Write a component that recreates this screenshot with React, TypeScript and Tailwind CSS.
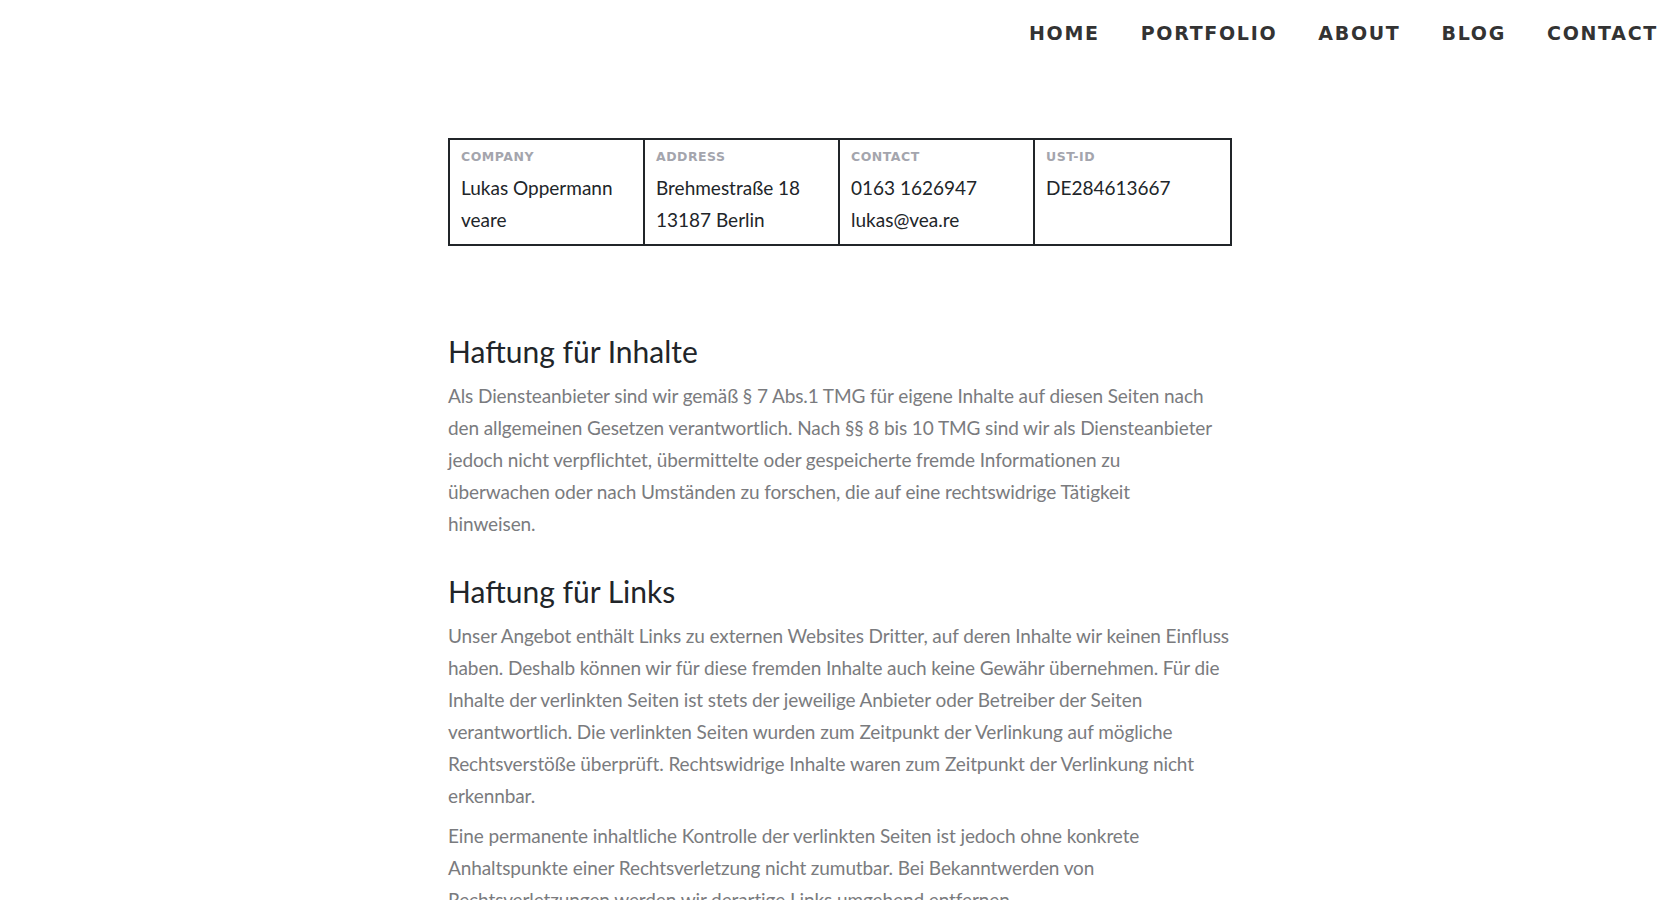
import React from "react";

const body = { fontFamily: "Lato, 'Open Sans', sans-serif" };
const nav = { fontFamily: "'DejaVu Sans', Verdana, sans-serif" };

const cells = [
  { label: "COMPANY", lines: ["Lukas Oppermann", "veare"] },
  { label: "ADDRESS", lines: ["Brehmestraße 18", "13187 Berlin"] },
  { label: "CONTACT", lines: ["0163 1626947", "lukas@vea.re"] },
  { label: "UST-ID", lines: ["DE284613667"] },
];

const p1 = [
  "Als Diensteanbieter sind wir gemäß § 7 Abs.1 TMG für eigene Inhalte auf diesen Seiten nach",
  "den allgemeinen Gesetzen verantwortlich. Nach §§ 8 bis 10 TMG sind wir als Diensteanbieter",
  "jedoch nicht verpflichtet, übermittelte oder gespeicherte fremde Informationen zu",
  "überwachen oder nach Umständen zu forschen, die auf eine rechtswidrige Tätigkeit",
  "hinweisen.",
];
const p2 = [
  "Unser Angebot enthält Links zu externen Websites Dritter, auf deren Inhalte wir keinen Einfluss",
  "haben. Deshalb können wir für diese fremden Inhalte auch keine Gewähr übernehmen. Für die",
  "Inhalte der verlinkten Seiten ist stets der jeweilige Anbieter oder Betreiber der Seiten",
  "verantwortlich. Die verlinkten Seiten wurden zum Zeitpunkt der Verlinkung auf mögliche",
  "Rechtsverstöße überprüft. Rechtswidrige Inhalte waren zum Zeitpunkt der Verlinkung nicht",
  "erkennbar.",
];
const p3 = [
  "Eine permanente inhaltliche Kontrolle der verlinkten Seiten ist jedoch ohne konkrete",
  "Anhaltspunkte einer Rechtsverletzung nicht zumutbar. Bei Bekanntwerden von",
  "Rechtsverletzungen werden wir derartige Links umgehend entfernen.",
];

function Para({ lines, className = "" }: { lines: string[]; className?: string }) {
  return (
    <p className={"text-[19px] leading-[32px] text-[#7a7b7e] whitespace-nowrap tracking-[-0.1px] " + className} style={body}>
      {lines.map((l, i) => (
        <React.Fragment key={i}>
          {l}
          {i < lines.length - 1 && <br />}
        </React.Fragment>
      ))}
    </p>
  );
}

export default function App() {
  return (
    <div className="w-[1680px] h-[900px] overflow-hidden bg-white">
      <header className="flex justify-end pr-[22px] pt-[23px]">
        <nav className="flex gap-[41px] text-[19px] font-bold tracking-[1.7px] text-[#333333] leading-[20px]" style={nav}>
          <span>HOME</span>
          <span>PORTFOLIO</span>
          <span>ABOUT</span>
          <span>BLOG</span>
          <span>CONTACT</span>
        </nav>
      </header>

      <main className="w-[784px] mx-auto mt-[95px]">
        <div className="grid grid-cols-4 border-2 border-[#212529]">
          {cells.map((c, i) => (
            <div key={c.label} className={"px-[11px] pt-[7px] pb-[8px] " + (i < 3 ? "border-r-2 border-[#212529]" : "")}>
              <div className="text-[12.5px] leading-[20px] font-bold tracking-[0.5px] text-[#a4a5ad]" style={nav}>
                {c.label}
              </div>
              <div className="mt-[5px] text-[19px] leading-[32px] text-[#212529]" style={body}>
                {c.lines.map((l) => (
                  <div key={l}>{l}</div>
                ))}
              </div>
            </div>
          ))}
        </div>

        <h2 className="mt-[87px] text-[30px] leading-[36px] text-[#212529]" style={body}>
          Haftung für Inhalte
        </h2>
        <Para lines={p1} className="mt-[11px]" />

        <h2 className="mt-[33px] text-[30px] leading-[36px] text-[#212529]" style={body}>
          Haftung für Links
        </h2>
        <Para lines={p2} className="mt-[11px]" />
        <Para lines={p3} className="mt-[8px]" />
      </main>
    </div>
  );
}
